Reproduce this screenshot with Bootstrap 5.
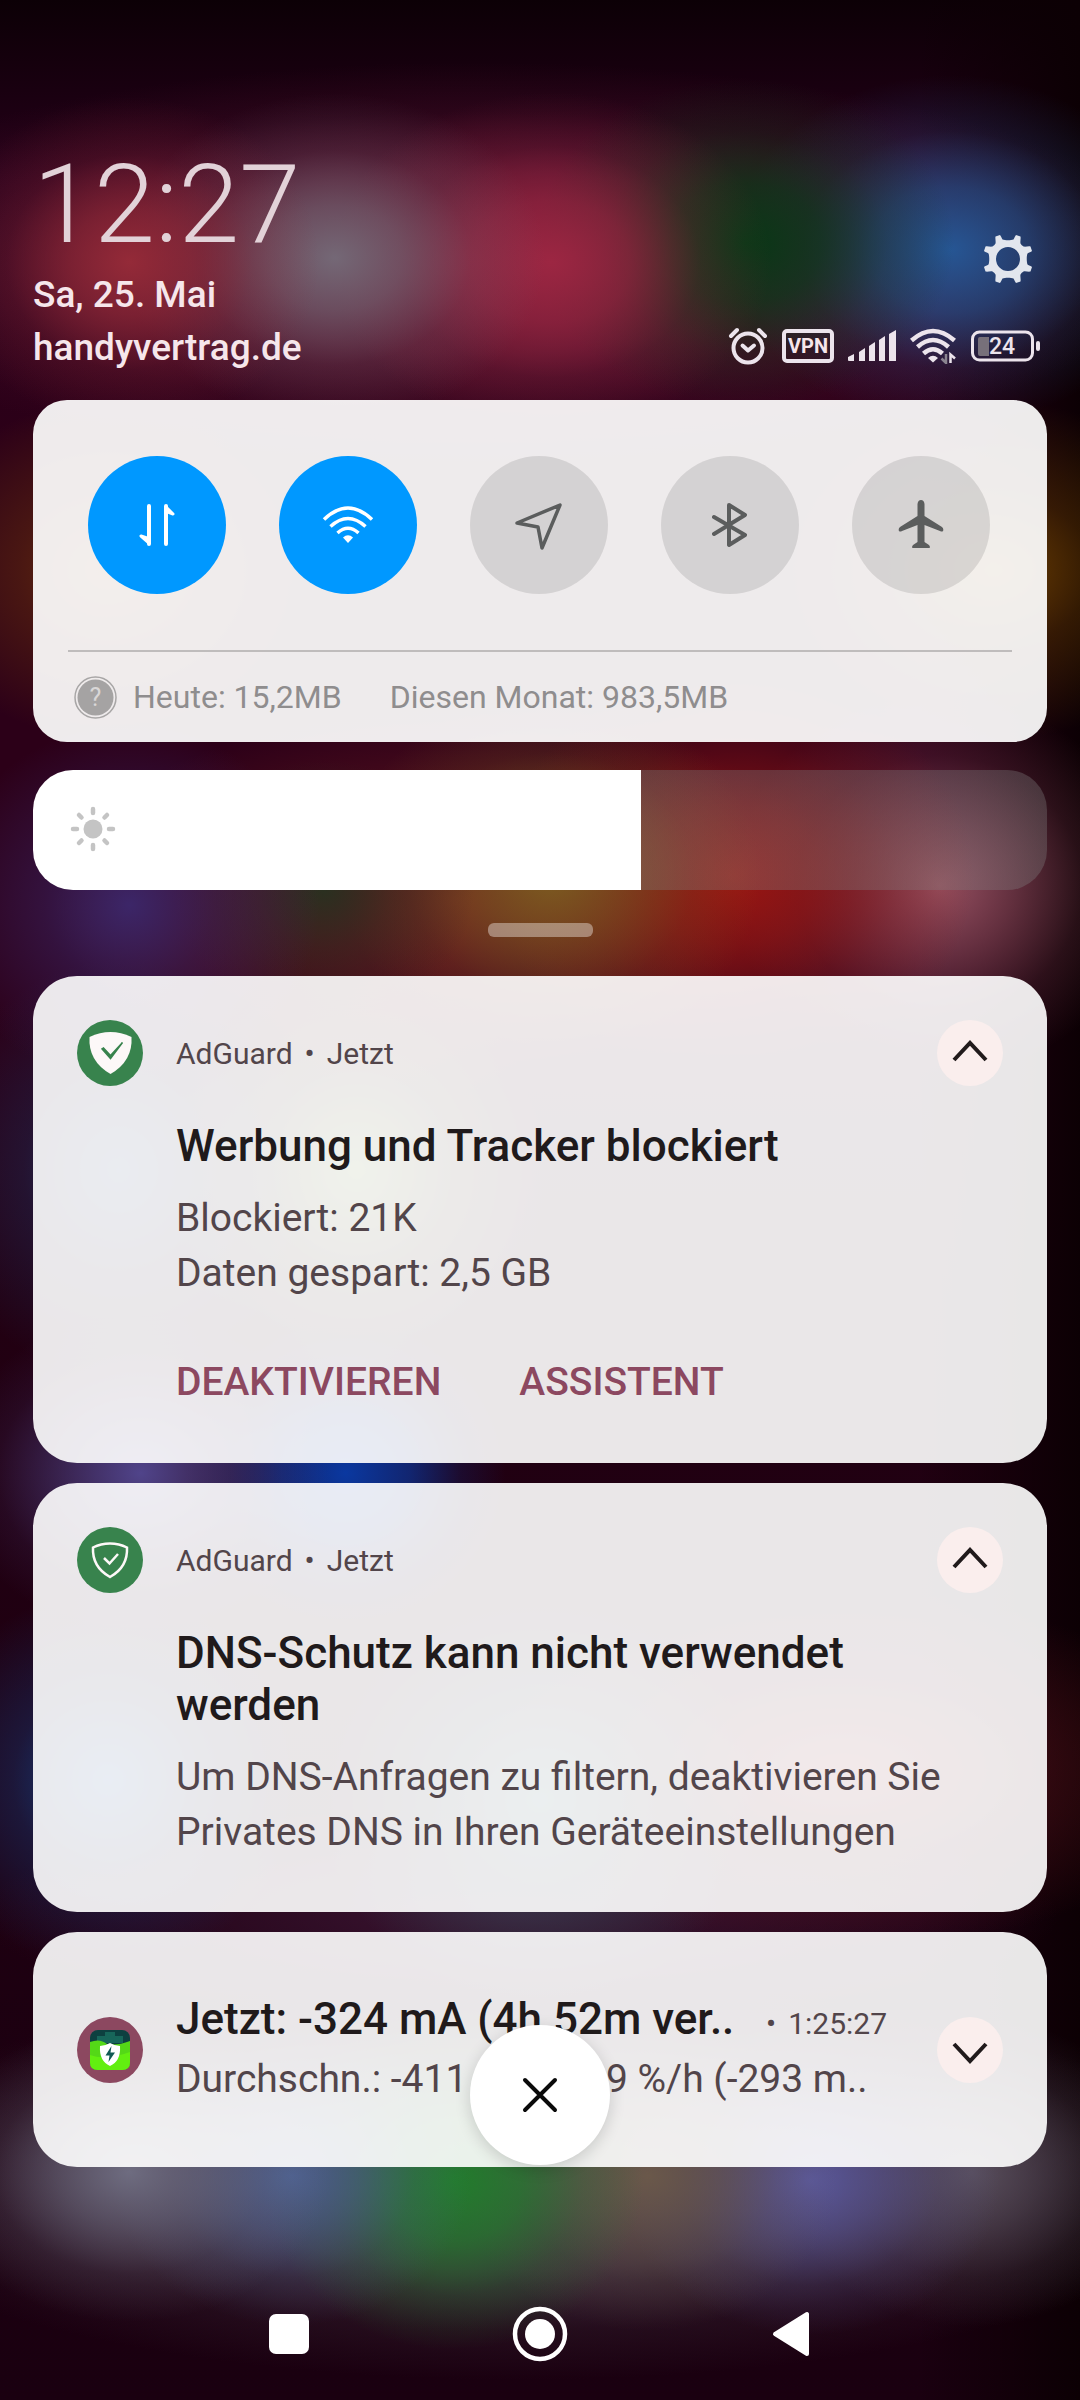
<!DOCTYPE html>
<html lang="de">
<head>
<meta charset="utf-8">
<meta name="viewport" content="width=device-width, initial-scale=1">
<title>Benachrichtigungen</title>
<link href="https://cdn.jsdelivr.net/npm/bootstrap@5.3.0/dist/css/bootstrap.min.css" rel="stylesheet">
<style>
body{font-family:Roboto,"Noto Sans",sans-serif;background-color:#1f000f;
background-image:
radial-gradient(190px 165px at 12% 262px,#942a38 0%,#942a38aa 32%,#942a3833 65%,#942a3800 100%),
radial-gradient(210px 165px at 31% 258px,#746876 0%,#746876aa 32%,#74687633 65%,#74687600 100%),
radial-gradient(220px 170px at 51% 262px,#9c2642 0%,#9c2642aa 36%,#9c264233 68%,#9c264200 100%),
radial-gradient(210px 165px at 69% 243px,#083816 0%,#083816bb 36%,#08381644 68%,#08381600 100%),
radial-gradient(220px 175px at 88% 250px,#265694 0%,#265694aa 36%,#26569433 68%,#26569400 100%),
radial-gradient(200px 170px at 10% 570px,#6a300c 0%,#6a300c77 45%,#6a300c00 100%),
radial-gradient(220px 170px at 92% 570px,#6c4000 0%,#6c400066 45%,#6c400000 100%),
radial-gradient(190px 180px at 12% 905px,#3c2668 0%,#3c266877 45%,#3c266800 100%),
radial-gradient(150px 130px at 30% 890px,#2a3020 0%,#2a302077 45%,#2a302000 100%),
radial-gradient(210px 180px at 51% 875px,#7c5c20 0%,#7c5c2099 35%,#7c5c2033 68%,#7c5c2000 100%),
radial-gradient(240px 200px at 68% 875px,#9c1612 0%,#9c1612aa 35%,#9c161244 68%,#9c161200 100%),
radial-gradient(210px 190px at 87% 885px,#945060 0%,#94506099 35%,#94506033 68%,#94506000 100%),
radial-gradient(400px 190px at 42% 900px,#701c20 0%,#701c2088 45%,#701c2000 100%),
radial-gradient(190px 210px at 11% 1170px,#203868 0%,#20386855 50%,#20386800 100%),
radial-gradient(190px 200px at 33% 1170px,#607830 0%,#60783055 50%,#60783000 100%),
radial-gradient(190px 160px at 13% 1473px,#50448a 0%,#50448a88 40%,#50448a22 75%,#50448a00 100%),
radial-gradient(160px 150px at 32% 1473px,#0a38a0 0%,#0a38a0aa 40%,#0a38a033 72%,#0a38a000 100%),
radial-gradient(190px 190px at 10% 1780px,#18458a 0%,#18458a55 50%,#18458a00 100%),
radial-gradient(220px 200px at 50% 1800px,#305860 0%,#30586066 50%,#30586000 100%),
radial-gradient(370px 180px at 78% 1770px,#7c1c24 0%,#7c1c2455 50%,#7c1c2400 100%),
radial-gradient(540px 110px at 48% 1915px,#3c1634 0%,#3c163488 45%,#3c163400 100%),
radial-gradient(200px 150px at 12% 2172px,#6e6c80 0%,#6e6c8099 36%,#6e6c8033 68%,#6e6c8000 100%),
radial-gradient(180px 150px at 27% 2176px,#4c6090 0%,#4c609099 36%,#4c609033 68%,#4c609000 100%),
radial-gradient(190px 170px at 42% 2180px,#227c2c 0%,#227c2cbb 36%,#227c2c44 68%,#227c2c00 100%),
radial-gradient(190px 155px at 60% 2176px,#6a584a 0%,#6a584a99 36%,#6a584a33 68%,#6a584a00 100%),
radial-gradient(190px 155px at 75% 2180px,#5a589c 0%,#5a589c99 36%,#5a589c33 68%,#5a589c00 100%),
radial-gradient(190px 155px at 90% 2172px,#584e5c 0%,#584e5c99 36%,#584e5c33 68%,#584e5c00 100%),
radial-gradient(700px 200px at 48% 2180px,#4c404e 0%,#4c404eaa 45%,#4c404e33 75%,#4c404e00 100%),
radial-gradient(700px 200px at 44% 262px,#661a34 0%,#661a34aa 45%,#661a3433 75%,#661a3400 100%),
linear-gradient(90deg,#18000a00 85%,#0c0004 100%),
linear-gradient(180deg,#0c0006 0,#26001a 180px,#2c0018 440px,#2c0018 1000px,#220012 1300px,#1a0010 100%)}
svg{display:block}
.shade{padding:144px 33px 0}
.shade-head{margin-bottom:26px}
.soft{color:#f6e6eb}
.clock{font-weight:300;font-size:110px;line-height:122px;color:#e2d2d8;margin-bottom:2px}
.meta{font-size:37px;line-height:53px;font-weight:500}
.status{gap:14px;height:56px;padding-right:6px}
.vpn-tag{font-size:20px;line-height:24px;font-weight:700;border:4px solid #ece4ec;border-radius:5px;padding:1px 2px}
.gear{margin:0 14px 34px 0;padding:0}
.glass{background:rgba(255,255,255,.92);border-radius:34px}
.tiles{padding:56px 57px 56px 55px}
.tile{width:138px;height:138px;border-radius:50%;border:0;padding:0;background:rgba(0,0,0,.105);color:#5b5d5d}
.tile.active-tile{background:#0098ff;color:#fff}
.rule{height:2px;background:#bfbcbc;margin:0 35px}
.usage{height:90px;padding-left:41px;font-size:32px;color:#8f8d8e}
.usage svg{margin-right:16px}
.usage .month{margin-left:48px}
.bright{margin-top:28px;height:120px;border-radius:40px;overflow:hidden}
.bright input{appearance:none;-webkit-appearance:none;width:100%;height:100%;margin:0;display:block;background:linear-gradient(90deg,#fff var(--level),rgba(130,130,130,.34) var(--level))}
.bright input::-webkit-slider-thumb{-webkit-appearance:none;width:1px;height:120px;background:transparent}
.sun{left:37px;top:36px;pointer-events:none}
.grip{width:105px;height:14px;border-radius:6px;border:0;padding:0;background:rgba(255,255,255,.38);margin:33px auto 39px}
.note{background:rgba(255,255,255,.905);border-radius:44px;padding:44px 44px 52px;margin-bottom:20px}
.note-head{height:66px}
.app{margin-left:33px;font-size:30px;color:#52454a}
.dot{margin:0 12px}
.fold{width:66px;height:66px;border-radius:50%;border:0;padding:0;background:#faeeed}
.note-body{padding:34px 0 0 99px}
.head-line{font-size:44px;line-height:52px;font-weight:500;color:#201a1b;margin:0}
.text-line{font-size:39px;line-height:55px;color:#52454a;margin:19px 0 0}
.acts{margin-top:53px;gap:78px}
.act{border:0;background:none;padding:0;font-size:39px;line-height:57px;font-weight:500;color:#8c4860}
.small-note{padding-top:61px;padding-bottom:60px;margin:0}
.small-text{padding-left:33px}
.small-note .text-line{margin-top:7px}
.small-note .since{font-size:30px;line-height:30px;color:#52454a}
.small-note .fold{margin-left:50px}
.since-dot{margin-right:12px}
.dismiss{left:50%;bottom:2px;margin-left:-70px;width:140px;height:140px;border-radius:50%;border:0;padding:0;background:#fff;box-shadow:0 4px 16px rgba(0,0,0,.16)}
.keys{height:130px;gap:123px}
.key{width:128px;height:128px;padding:0;border:0;background:none}
</style>
<script src="https://cdn.jsdelivr.net/npm/bootstrap@5.3.0/dist/js/bootstrap.bundle.min.js"></script>
</head>
<body>
<div class="d-flex flex-column min-vh-100">
<main class="shade flex-grow-1">
  <header class="shade-head d-flex justify-content-between align-items-end soft">
    <div>
      <div class="clock">12:27</div>
      <div class="meta">Sa, 25. Mai</div>
      <div class="meta">handyvertrag.de</div>
    </div>
    <div class="d-flex flex-column align-items-end">
      <button class="btn gear" aria-label="Einstellungen"><svg width="48" height="48" viewBox="-24 -24 48 48"><path fill="#e2e6ee" fill-rule="evenodd" d="M-5.500 -19.500C-3 -18.500 3 -18.500 5.500 -19.500C6.500 -21 7 -23 8 -24L12.500 -22.500C13 -20.500 12 -17.500 12.500 -15.500C13.500 -14 14 -13.500 15.500 -12.500C17.500 -12 20.500 -13 22.500 -12.500L24 -8C23 -7 21 -6.500 19.500 -5.500C18.500 -3 18.500 3 19.500 5.500C21 6.500 23 7 24 8L22.500 12.500C20.500 13 17.500 12 15.500 12.500C14 13.500 13.500 14 12.500 15.500C12 17.500 13 20.500 12.500 22.500L8 24C7 23 6.500 21 5.500 19.500C3 18.500 -3 18.500 -5.500 19.500C-6.500 21 -7 23 -8 24L-12.500 22.500C-13 20.500 -12 17.500 -12.500 15.500C-13.500 14 -14 13.500 -15.500 12.500C-17.500 12 -20.500 13 -22.500 12.500L-24 8C-23 7 -21 6.500 -19.500 5.500C-18.500 3 -18.500 -3 -19.500 -5.500C-21 -6.500 -23 -7 -24 -8L-22.500 -12.500C-20.500 -13 -17.500 -12 -15.500 -12.500C-14 -13.500 -13.500 -14 -12.500 -15.500C-12 -17.500 -13 -20.500 -12.500 -22.500L-8 -24C-7 -23 -6.500 -21 -5.500 -19.500ZM0 -12A12 12 0 1 0 0 12A12 12 0 1 0 0 -12Z"/></svg></button>
      <div class="status d-flex align-items-center">
        <svg width="40" height="38" viewBox="0 0 40 38" fill="none" stroke="#ece4ec" stroke-linecap="round" stroke-linejoin="round"><circle cx="20" cy="21" r="14.500" stroke-width="4"/><path d="M3 9 L9 3M31 3L37 9" stroke-width="4"/><path d="M14.500 18.500L20 23.500L26 18.500" stroke-width="4"/></svg>
        <span class="vpn-tag">VPN</span>
        <svg width="48" height="32" viewBox="0 0 48 32" fill="#ece4ec"><path d="M0 27L6 24V31H1Q0 31 0 30ZM11 22L17 18V31H11ZM21 16L27 12V31H21ZM31 10L37 6V31H31ZM41 4L48 0V31H41Z"/></svg>
        <svg width="47" height="36" viewBox="0 0 47 36" fill="none" stroke="#ece4ec" stroke-width="4.500"><path d="M1.500 12.500Q23 -6.500 44.500 12.500M7.500 19Q23 5 38.500 19M13.500 25.500Q23 17 32.500 25.500"/><path d="M18 30Q23 25.500 28 30L23 34.500Z" fill="#ece4ec" stroke="none"/><path d="M36 26V35L31.500 30.500" stroke="#8a8490" stroke-width="2.500"/><path d="M40.500 35V26.500L45 30.500" stroke-width="2.500"/></svg>
        <svg width="70" height="32" viewBox="0 0 70 32"><rect x="1.500" y="2" width="60" height="28" rx="7" fill="none" stroke="#ece4ec" stroke-width="3"/><path d="M9 7H18V26H9Q7 26 7 24V9Q7 7 9 7Z" fill="#77707a"/><rect x="65" y="11" width="4" height="10" rx="2" fill="#ece4ec"/><text x="31" y="24" font-size="23" font-weight="500" text-anchor="middle" fill="#ece4ec">24</text></svg>
      </div>
    </div>
  </header>

  <section class="glass">
    <div class="tiles d-flex justify-content-between">
      <button class="tile active-tile d-flex align-items-center justify-content-center" aria-label="Mobile Daten"><svg width="40" height="46" viewBox="0 0 40 46" fill="none" stroke="currentColor" stroke-width="4" stroke-linecap="round" stroke-linejoin="round"><path d="M12 4V42M29 42V4"/><path d="M12 41L4 34L10 36ZM29 5L36 12L31 10Z" stroke-width="3" fill="currentColor"/></svg></button>
      <button class="tile active-tile d-flex align-items-center justify-content-center" aria-label="WLAN"><svg width="52" height="40" viewBox="0 0 52 40" fill="none" stroke="currentColor" stroke-width="3.500"><path d="M2 14.500Q26 -8.500 50 14.500M8.500 21.500Q26 5.500 43.500 21.500M15.500 28Q26 18.500 36.500 28"/><path d="M21 32.500Q26 28 31 32.500L26 38Z" fill="currentColor" stroke="none"/></svg></button>
      <button class="tile d-flex align-items-center justify-content-center" aria-label="Standort"><svg width="50" height="50" viewBox="0 0 50 50" fill="none" stroke="currentColor" stroke-width="3.500" stroke-linejoin="round"><path d="M3 23L46 5L28 48L24 27Z"/></svg></button>
      <button class="tile d-flex align-items-center justify-content-center" aria-label="Bluetooth"><svg width="36" height="46" viewBox="0 0 36 46" fill="none" stroke="currentColor" stroke-width="4" stroke-linecap="round" stroke-linejoin="round"><path d="M2 15L33 33L17 43V3L33 13L2 32"/></svg></button>
      <button class="tile d-flex align-items-center justify-content-center" aria-label="Flugmodus"><svg width="46" height="50" viewBox="0 0 46 50" fill="currentColor"><path d="M19.500 4Q20 0 23 0Q26 0 26.500 4V16L44 27Q46 29 45 31Q44 32 42 31L26.500 25V42L31 45Q33 48 31 48H15Q13 48 15 45L19.500 42V25L4 31Q2 32 1 31Q0 29 2 27L19.500 16Z"/></svg></button>
    </div>
    <div class="rule"></div>
    <div class="usage d-flex align-items-center">
      <svg width="43" height="43" viewBox="0 0 43 43"><circle cx="21.500" cy="21.500" r="20.500" fill="none" stroke="#a8a6a6" stroke-width="1.500"/><circle cx="21.500" cy="21.500" r="18" fill="#a5a3a3"/><text x="21.500" y="30" font-size="25" text-anchor="middle" fill="#d9d7d7">?</text></svg>
      <span>Heute: 15,2MB</span><span class="month">Diesen Monat: 983,5MB</span>
    </div>
  </section>

  <div class="bright position-relative">
    <input type="range" min="0" max="100" value="60" aria-label="Helligkeit" style="--level:60%">
    <svg class="sun position-absolute" width="46" height="46" viewBox="-23 -23 46 46" fill="#c4c4c4" stroke="#c4c4c4" stroke-width="4.500" stroke-linecap="round"><circle r="9.500" stroke="none"/><path d="M0 -20V-16M0 20V16M-20 0H-16M20 0H16M-14 -14L-11.500 -11.500M14 14L11.500 11.500M-14 14L-11.500 11.500M14 -14L11.500 -11.500"/></svg>
  </div>
  <button class="grip d-block" aria-label="Schnelleinstellungen aufklappen"></button>

  <article class="note">
    <div class="note-head d-flex align-items-center">
      <svg width="66" height="66" viewBox="0 0 66 66"><circle cx="33" cy="33" r="33" fill="#38834d"/><path d="M33.500 12Q44 12 54.500 17Q56 41 33.500 54Q11 41 12.500 17Q23 12 33.500 12Z" fill="#fdf8f8"/><path d="M26.500 28L33.500 35.500L45.500 22.500L33.500 38.500L25 29Z" fill="#38834d" stroke="#38834d" stroke-width="1.500"/></svg>
      <div class="app">AdGuard<span class="dot">•</span>Jetzt</div>
      <button class="fold ms-auto" aria-label="Einklappen"><svg width="66" height="66" fill="none" stroke="#201a1b" stroke-width="4"><path d="M17 40L33 23L49 40"/></svg></button>
    </div>
    <div class="note-body">
      <h2 class="head-line">Werbung und Tracker blockiert</h2>
      <p class="text-line">Blockiert: 21K<br>Daten gespart: 2,5 GB</p>
      <div class="acts d-flex"><button class="act">DEAKTIVIEREN</button><button class="act">ASSISTENT</button></div>
    </div>
  </article>

  <article class="note">
    <div class="note-head d-flex align-items-center">
      <svg width="66" height="66" viewBox="0 0 66 66"><circle cx="33" cy="33" r="33" fill="#38834d"/><path d="M33 16.500Q42 16.500 50 20.500Q51 40 33 50Q15 40 16 20.500Q24 16.500 33 16.500Z" fill="none" stroke="#fdf8f8" stroke-width="2.500"/><path d="M27 31L32.500 36.500L41 27" fill="none" stroke="#fdf8f8" stroke-width="2.500"/></svg>
      <div class="app">AdGuard<span class="dot">•</span>Jetzt</div>
      <button class="fold ms-auto" aria-label="Einklappen"><svg width="66" height="66" fill="none" stroke="#201a1b" stroke-width="4"><path d="M17 40L33 23L49 40"/></svg></button>
    </div>
    <div class="note-body">
      <h2 class="head-line">DNS-Schutz kann nicht verwendet<br>werden</h2>
      <p class="text-line">Um DNS-Anfragen zu filtern, deaktivieren Sie Privates DNS in Ihren Geräteeinstellungen</p>
    </div>
  </article>

  <article class="note small-note position-relative d-flex align-items-center">
    <svg class="flex-shrink-0" width="66" height="66" viewBox="0 0 66 66"><circle cx="33" cy="33" r="33" fill="#8c4860"/><rect x="13" y="13" width="40" height="40" rx="8" fill="#0d4040"/><path d="M20 19H28V15H38V19H46V26H20Z" fill="#17665a"/><path d="M13 25Q23 21 30 27Q40 29 53 24V45Q53 53 45 53H21Q13 53 13 45Z" fill="#54d817"/><path d="M13 38Q28 44 53 35V45Q53 53 45 53H21Q13 53 13 45Z" fill="#62ee10"/><path d="M33 26Q38 29 43 29Q44 44 33 49Q22 44 23 29Q28 29 33 26Z" fill="#fff"/><path d="M34.500 29L28.500 38.500H32.500L31.500 45L38 35.500H33.500Z" fill="#115a55"/></svg>
    <div class="small-text flex-grow-1 text-nowrap">
      <div class="d-flex justify-content-between align-items-baseline"><h2 class="head-line">Jetzt: -324 mA (4h 52m ver..</h2><span class="since"><span class="since-dot">•</span>1:25:27</span></div>
      <p class="text-line">Durchschn.: -411 mA | -5,9 %/h (-293 m..</p>
    </div>
    <button class="fold flex-shrink-0" aria-label="Ausklappen"><svg width="66" height="66" fill="none" stroke="#201a1b" stroke-width="4"><path d="M17 27L33 44L49 27"/></svg></button>
    <button class="dismiss position-absolute d-flex align-items-center justify-content-center" aria-label="Alle löschen"><svg width="36" height="36" fill="none" stroke="#0a0a0a" stroke-width="4" stroke-linecap="round"><path d="M3 3L33 33M33 3L3 33"/></svg></button>
  </article>
</main>

<nav class="keys d-flex justify-content-center" aria-label="Navigation">
  <button class="key d-flex align-items-center justify-content-center" aria-label="Übersicht"><svg width="40" height="40"><rect width="40" height="40" rx="7" fill="#fff"/></svg></button>
  <button class="key d-flex align-items-center justify-content-center" aria-label="Startseite"><svg width="56" height="56"><circle cx="28" cy="28" r="25" fill="none" stroke="#fff" stroke-width="4.500"/><circle cx="28" cy="28" r="15" fill="#fff"/></svg></button>
  <button class="key d-flex align-items-center justify-content-center" aria-label="Zurück"><svg width="38" height="48" fill="#fff" stroke="#fff" stroke-width="4" stroke-linejoin="round"><path d="M3 24L35 4V44Z"/></svg></button>
</nav>
</div>
</body>
</html>
